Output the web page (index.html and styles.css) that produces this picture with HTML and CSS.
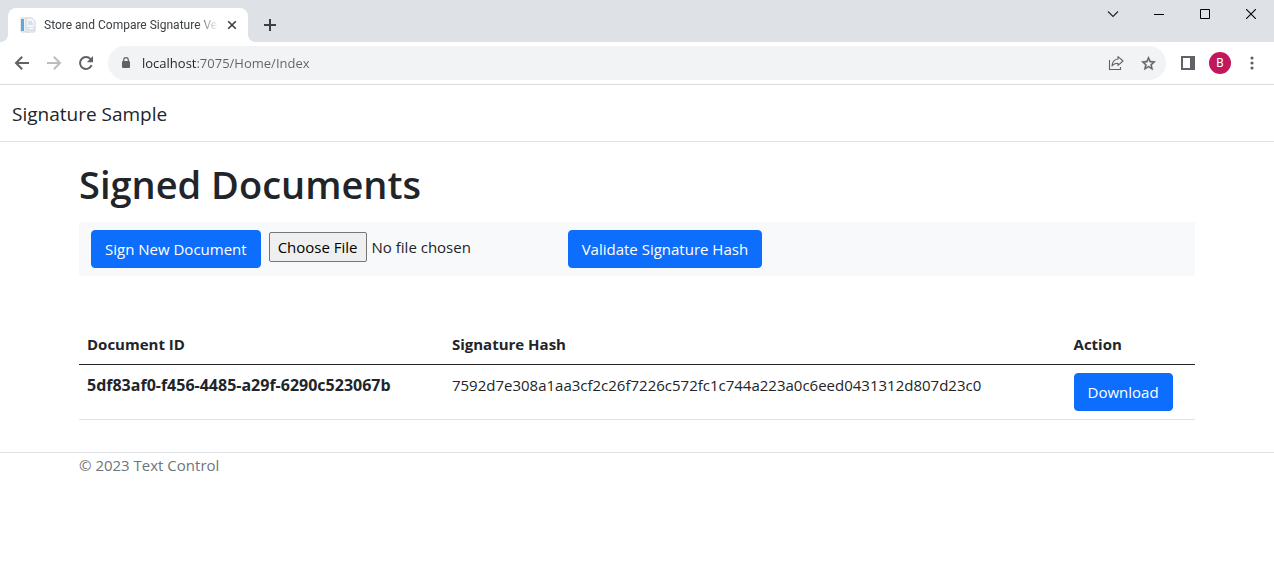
FILE: index.html
```html
<!DOCTYPE html>
<html lang="en">
<head>
  <meta charset="utf-8">
  <title>Store and Compare Signature Ve</title>
  <link rel="stylesheet" href="styles.css">
</head>
<body>
  <div class="browser">
    <div class="tab-strip">
      <div class="tab">
        <svg class="favicon" width="16" height="16" viewBox="0 0 16 16">
          <path d="M1 1h9v14H1z" fill="#eef1f4" stroke="#d5dae0" stroke-width="1"/>
          <path d="M1 2h3v12H1z" fill="#5fa8dc"/>
          <path d="M6 1h6l3 3v11H6z" fill="#f3f5f8" stroke="#cfd5de" stroke-width="1"/>
          <path d="M8 5h4M8 7h5" stroke="#c2cad6" stroke-width="1"/>
          <path d="M7 10h8v4H7z" fill="#dce2ea"/>
          <path d="M9 11h4v1H9z" fill="#fff"/>
        </svg>
        <span class="tab-title">Store and Compare Signature Ve</span>
        <button class="tab-close" aria-label="Close tab">
          <svg width="10" height="10" viewBox="0 0 10 10"><path d="M1.2 1.2l7.6 7.6M8.8 1.2L1.2 8.8" stroke="#3c4043" stroke-width="1.6"/></svg>
        </button>
      </div>
      <button class="new-tab" aria-label="New tab">
        <svg width="12" height="12" viewBox="0 0 12 12"><path d="M6 0v12M0 6h12" stroke="#3c4043" stroke-width="2"/></svg>
      </button>
      <div class="window-controls">
        <button aria-label="Search tabs"><svg width="12" height="12" viewBox="0 0 12 12"><path d="M1 3.5l5 5 5-5" fill="none" stroke="#222" stroke-width="1.1"/></svg></button>
        <button aria-label="Minimize"><svg width="10" height="10" viewBox="0 0 10 10"><path d="M0 5.5h10" stroke="#000"/></svg></button>
        <button aria-label="Maximize"><svg width="10" height="10" viewBox="0 0 10 10"><path d="M.5.5h9v9h-9z" fill="none" stroke="#000"/></svg></button>
        <button aria-label="Close"><svg width="10" height="10" viewBox="0 0 10 10"><path d="M0 0l10 10M10 0L0 10" stroke="#000" stroke-width="1.1"/></svg></button>
      </div>
    </div>

    <div class="toolbar">
      <button class="nav-btn" aria-label="Back">
        <svg width="16" height="16" viewBox="0 0 16 16"><path d="M15 8H2.5M8.2 1.8L2 8l6.2 6.2" fill="none" stroke="#5f6368" stroke-width="2"/></svg>
      </button>
      <button class="nav-btn" aria-label="Forward" disabled>
        <svg width="16" height="16" viewBox="0 0 16 16"><path d="M1 8h12.5M7.8 1.8L14 8l-6.2 6.2" fill="none" stroke="#babcbe" stroke-width="2"/></svg>
      </button>
      <button class="nav-btn" aria-label="Reload">
        <svg width="16" height="16" viewBox="0 0 16 16"><path d="M13.6 10.2A6 6 0 1 1 12.6 4.1" fill="none" stroke="#5f6368" stroke-width="2"/><path d="M15 1v6.2H8.8z" fill="#5f6368"/></svg>
      </button>
      <div class="omnibox">
        <svg width="10" height="14" viewBox="0 0 10 14"><path d="M2.700 6V4a2.300 2.300 0 0 1 4.600 0V6" fill="none" stroke="#5f6368" stroke-width="1.2"/><rect x="1" y="5" width="8" height="7" rx="1" fill="#5f6368"/></svg>
        <input class="address" type="text" aria-label="Address" value="localhost:7075/Home/Index">
        <button class="omni-btn" aria-label="Share">
          <svg width="16" height="16" viewBox="0 0 16 16"><path d="M1.500 5v9.500h11V12" fill="none" stroke="#5f6368" stroke-width="1.1"/><path d="M10 1.600L15 6l-5 4.400V8.200C7 8.200 5.200 9 4 11 4.300 7.300 6.300 4.400 10 4z" fill="none" stroke="#5f6368" stroke-width="1.1" stroke-linejoin="round"/></svg>
        </button>
        <button class="omni-btn" aria-label="Bookmark">
          <svg width="17" height="17" viewBox="0 0 24 24"><path d="M22 9.240l-7.190-.62L12 2 9.190 8.630 2 9.240l5.460 4.730L5.820 21 12 17.270 18.180 21l-1.630-7.030zM12 15.400l-3.760 2.270 1-4.280-3.320-2.880 4.380-.38L12 6.100l1.710 4.040 4.380.38-3.320 2.880 1 4.280z" fill="#5f6368" stroke="#5f6368" stroke-width=".6"/></svg>
        </button>
      </div>
      <button class="nav-btn" aria-label="Side panel">
        <svg width="14" height="14" viewBox="0 0 14 14"><path d="M0 0h14v14H0zM2 2v10h7V2z" fill="#5f6368" fill-rule="evenodd"/></svg>
      </button>
      <button class="nav-btn avatar" aria-label="Profile">B</button>
      <button class="nav-btn" aria-label="Menu">
        <svg width="4" height="14" viewBox="0 0 4 14"><g fill="#5f6368"><circle cx="2" cy="2" r="1.600"/><circle cx="2" cy="7" r="1.600"/><circle cx="2" cy="12" r="1.600"/></g></svg>
      </button>
    </div>
  </div>

  <header class="navbar">
    <a class="navbar-brand" href="#">Signature Sample</a>
  </header>

  <main class="container">
    <h1>Signed Documents</h1>

    <form class="actions">
      <a class="btn" href="#">Sign New Document</a>
      <input class="file-input" type="file" aria-label="Signed document">
      <button class="btn" type="submit">Validate Signature Hash</button>
    </form>

    <table class="table">
      <thead>
        <tr>
          <th class="col-id" scope="col">Document ID</th>
          <th scope="col">Signature Hash</th>
          <th class="col-action" scope="col">Action</th>
        </tr>
      </thead>
      <tbody>
        <tr>
          <th scope="row">5df83af0-f456-4485-a29f-6290c523067b</th>
          <td>7592d7e308a1aa3cf2c26f7226c572fc1c744a223a0c6eed0431312d807d23c0</td>
          <td><a class="btn" href="#">Download</a></td>
        </tr>
      </tbody>
    </table>
  </main>

  <footer class="footer">
    <div class="container">&copy; 2023 Text Control</div>
  </footer>
</body>
</html>
```
FILE: styles.css
```css
* {
  box-sizing: border-box;
}

body {
  margin: 0;
  background-color: #fff;
  color: #212529;
  font-family: "Segoe UI", "Open Sans", "Noto Sans", sans-serif;
  font-size: 15px;
  line-height: 24px;
}

button {
  font-family: inherit;
}

svg {
  display: block;
}

/* browser frame */
.browser {
  border-bottom: 1px solid #dadce0;
}

.tab-strip {
  display: flex;
  height: 42px;
  padding-left: 8px;
  background-color: #dee1e6;
}

.tab {
  position: relative;
  display: flex;
  align-items: center;
  gap: 8px;
  width: 240px;
  margin-top: 8px;
  padding: 0 10px 0 12px;
  background-color: #fff;
  border-radius: 8px 8px 0 0;
}

.tab::before,
.tab::after {
  content: "";
  position: absolute;
  bottom: 0;
  width: 8px;
  height: 8px;
}

.tab::before {
  left: -8px;
  background: radial-gradient(circle at 0 0, #dee1e6 8px, #fff 8px);
}

.tab::after {
  right: -8px;
  background: radial-gradient(circle at 100% 0, #dee1e6 8px, #fff 8px);
}

.favicon {
  flex: none;
}

.tab-title {
  flex: 1;
  overflow: hidden;
  white-space: nowrap;
  color: #3c4043;
  font-family: "Segoe UI", Roboto, sans-serif;
  font-size: 12px;
  mask-image: linear-gradient(to right, #000 88%, transparent);
}

.tab-close,
.new-tab,
.window-controls button,
.nav-btn,
.omni-btn {
  display: flex;
  align-items: center;
  justify-content: center;
  padding: 0;
  border: none;
  background: none;
}

.tab-close {
  width: 12px;
  height: 16px;
}

.new-tab {
  width: 28px;
  height: 28px;
  margin: 11px 0 0 8px;
}

.window-controls {
  display: flex;
  margin-left: auto;
}

.window-controls button {
  width: 46px;
  height: 28px;
}

.toolbar {
  display: flex;
  align-items: center;
  height: 42px;
  padding: 0 6px;
}

.nav-btn {
  width: 32px;
  height: 32px;
}

.omnibox {
  display: flex;
  flex: 1;
  align-items: center;
  height: 34px;
  margin: 0 6px;
  padding: 0 2px 0 13px;
  border-radius: 17px;
  background-color: #f1f3f4;
}

.address {
  flex: 1;
  min-width: 0;
  margin-left: 11px;
  padding: 0;
  border: none;
  outline: none;
  font-family: inherit;
  font-size: 13px;
  color: transparent;
  background: linear-gradient(to right, #202124 54px, #5f6368 54px);
  background-clip: text;
}

.omni-btn {
  width: 32px;
  height: 32px;
}

.avatar {
  width: 22px;
  height: 22px;
  margin: 0 5px;
  border-radius: 50%;
  background-color: #c2185b;
  color: #fff;
  font-family: Roboto, sans-serif;
  font-size: 12px;
}

/* page */
.navbar {
  padding: 15px 12px 13px;
  border-bottom: 1px solid #dee2e6;
}

.navbar-brand {
  display: block;
  color: #212529;
  font-size: 19px;
  line-height: 28px;
  text-decoration: none;
}

.container {
  max-width: 1140px;
  margin: 0 auto;
  padding: 0 12px;
}

main.container {
  padding-top: 18px;
}

h1 {
  margin: 0 0 14px;
  font-size: 38px;
  font-weight: 600;
  line-height: 48px;
}

.actions {
  display: flex;
  align-items: flex-start;
  gap: 8px;
  padding: 8px 12px;
  background-color: #f8f9fa;
}

.btn {
  display: inline-block;
  padding: 6px 13px;
  border: 1px solid #0d6efd;
  border-radius: 4px;
  background-color: #0d6efd;
  color: #fff;
  font-size: 15px;
  line-height: 24px;
  text-decoration: none;
}

.file-input {
  width: 291px;
  margin-top: 2px;
  color: #212529;
  font-family: inherit;
  font-size: 15px;
}

.file-input::file-selector-button {
  height: 30px;
  margin-right: 5px;
  padding: 1px 8px;
  border: 1px solid #767676;
  border-radius: 2px;
  background-color: #efefef;
  color: #000;
  font-family: inherit;
  font-size: 15px;
}

.table {
  width: 100%;
  margin-top: 48px;
  border-collapse: collapse;
  table-layout: fixed;
}

.table th,
.table td {
  padding: 8px;
  border-bottom: 1px solid #dee2e6;
  text-align: left;
  vertical-align: top;
}

.table thead th {
  border-bottom-color: #212529;
}

.table tbody th {
  font-size: 16px;
}

.col-id {
  width: 32.7%;
}

.col-action {
  width: 11.6%;
}

.footer {
  margin-top: 32px;
  border-top: 1px solid #dee2e6;
  color: #6c757d;
}
```
